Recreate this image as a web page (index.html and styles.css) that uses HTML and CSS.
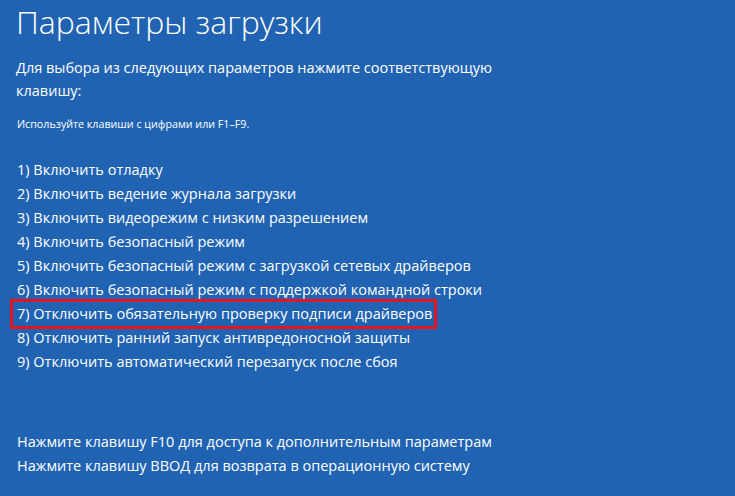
FILE: index.html
```html
<!DOCTYPE html>
<html lang="ru">

<head>
    <meta charset="UTF-8">
    <meta name="viewport" content="width=device-width, initial-scale=1.0">
    <title>Параметры загрузки</title>
    <link rel="stylesheet" href="styles.css">
</head>

<body>
    <div class="screen">
        <h1 class="title">Параметры загрузки</h1>
        <p class="intro">Для выбора из следующих параметров нажмите соответствующую клавишу:</p>
        <p class="hint">Используйте клавиши с цифрами или F1–F9.</p>

        <ul class="options">
            <li>1) Включить отладку</li>
            <li>2) Включить ведение журнала загрузки</li>
            <li>3) Включить видеорежим с низким разрешением</li>
            <li>4) Включить безопасный режим</li>
            <li>5) Включить безопасный режим с загрузкой сетевых драйверов</li>
            <li>6) Включить безопасный режим с поддержкой командной строки</li>
            <li class="marked">7) Отключить обязательную проверку подписи драйверов</li>
            <li>8) Отключить ранний запуск антивредоносной защиты</li>
            <li>9) Отключить автоматический перезапуск после сбоя</li>
        </ul>

        <div class="footer">
            <p>Нажмите клавишу F10 для доступа к дополнительным параметрам</p>
            <p>Нажмите клавишу ВВОД для возврата в операционную систему</p>
        </div>
    </div>
</body>

</html>
```

FILE: styles.css
```css
* {
    box-sizing: border-box;
}

html,
body {
    margin: 0;
    height: 100%;
}

body {
    background: #2163b3;
    color: #fff;
    font-family: "Open Sans", "Noto Sans", "DejaVu Sans", sans-serif;
}

.screen {
    padding: 0 0 0 16px;
    height: 100%;
    display: flex;
    flex-direction: column;
}

.title {
    margin: 0;
    padding-top: 2px;
    font-size: 32px;
    font-weight: 300;
    line-height: 40px;
}

.intro {
    margin: 14px 0 0 0;
    width: 500px;
    font-size: 14.5px;
    line-height: 23px;
}

.hint {
    margin: 14px 0 0 1px;
    font-size: 10.7px;
    line-height: 16px;
}

.options {
    list-style: none;
    margin: 26px 0 0 0;
    padding: 0;
    font-size: 14.5px;
    line-height: 24px;
}

.options li {
    padding-left: 1px;
    white-space: nowrap;
}

.options .marked {
    margin: -3px 0 -3px -6px;
    padding-left: 4px;
    width: 427px;
    border: 3px solid #e8141c;
}

.footer {
    margin-top: 56px;
    font-size: 14.5px;
    line-height: 24px;
}

.footer p {
    margin: 0;
    padding-left: 1px;
}
```
